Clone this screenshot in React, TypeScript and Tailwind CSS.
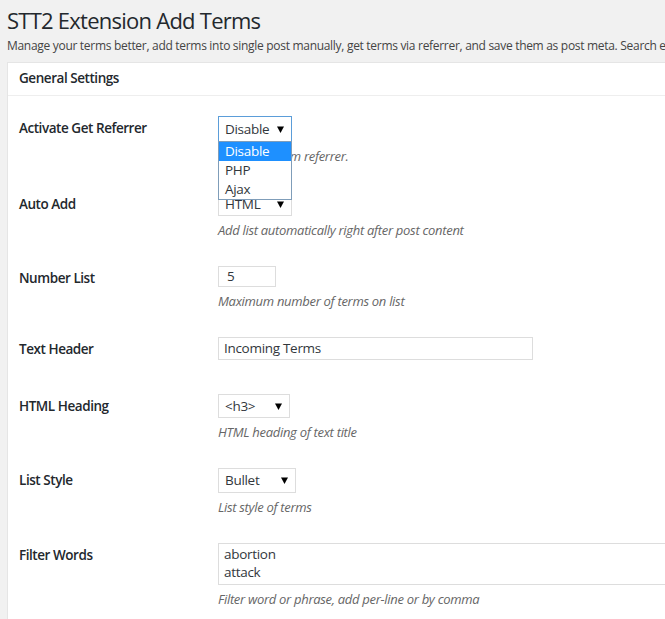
import React from "react";

const Arrow = () => (
  <svg width="7" height="7" viewBox="0 0 7 7" className="shrink-0">
    <polygon points="0,0.5 7,0.5 3.5,7" fill="#000" />
  </svg>
);

const Row = ({ label, children, last }: { label: string; children: React.ReactNode; last?: boolean }) => (
  <div className={`flex pt-[13px] ${last ? "pb-[19px]" : "pb-[13px]"}`}>
    <div className="w-[210px] shrink-0 pl-[11px] text-[13.5px] font-semibold leading-[25px] tracking-[-0.45px] text-[#23282d]">
      {label}
    </div>
    <div className="flex flex-col">{children}</div>
  </div>
);

const Desc = ({ children }: { children: React.ReactNode }) => (
  <p className="mt-[4px] text-[13px] italic leading-[20px] tracking-[-0.3px] text-[#666]">{children}</p>
);

const SelectBox = ({ value, w, h, focused }: { value: string; w: string; h: string; focused?: boolean }) => (
  <div
    className={`flex items-center justify-between border bg-white pl-[6px] pr-[7px] text-[13.5px] tracking-[-0.3px] text-[#32373c] ${w} ${h} ${
      focused ? "border-[#5b9dd9]" : "border-[#ddd]"
    }`}
  >
    <span>{value}</span>
    <Arrow />
  </div>
);

export default function App() {
  return (
    <div
      className="h-[619px] w-[665px] overflow-hidden bg-[#f1f1f1]"
      style={{ fontFamily: '"Open Sans", "Liberation Sans", sans-serif' }}
    >
      <div className="w-[1000px] pl-[7px]">
        <h1 className="pt-[4px] text-[22px] font-normal leading-[32px] tracking-[-0.75px] text-[#23282d]">
          STT2 Extension Add Terms
        </h1>
        <p className="mt-[1px] whitespace-nowrap text-[12px] leading-[18px] tracking-[-0.3px] text-[#444]">
          Manage your terms better, add terms into single post manually, get terms via referrer, and save them as post meta. Search engine terms.
        </p>

        <div className="mt-[7px] border border-[#e5e5e5] bg-white">
          <div className="border-b border-[#eee] px-[11px] pt-[6px] pb-[8px] text-[13.5px] font-semibold leading-[18px] tracking-[-0.45px] text-[#23282d]">
            General Settings
          </div>

          <div className="pt-[7px]">
            <Row label="Activate Get Referrer">
              <div className="relative">
                <SelectBox value="Disable" w="w-[74px]" h="h-[26px]" focused />
                <div className="absolute left-0 top-[25px] z-10 w-[74px] border border-[#7f9db9] bg-white text-[13.5px] leading-[19px] tracking-[-0.3px] text-[#32373c]">
                  <div className="bg-[#1e90ff] pl-[6px] text-white">Disable</div>
                  <div className="pl-[6px]">PHP</div>
                  <div className="pl-[6px]">Ajax</div>
                </div>
              </div>
              <Desc>Get terms from referrer.</Desc>
            </Row>

            <Row label="Auto Add">
              <SelectBox value="HTML" w="w-[74px]" h="h-[24px]" />
              <Desc>Add list automatically right after post content</Desc>
            </Row>

            <Row label="Number List">
              <div className="flex h-[21px] w-[58px] items-center border border-[#ddd] pl-[8px] text-[13.5px] text-[#32373c]">5</div>
              <Desc>Maximum number of terms on list</Desc>
            </Row>

            <Row label="Text Header" last>
              <div className="flex h-[23px] w-[315px] items-center border border-[#ddd] pl-[5px] text-[13.5px] tracking-[-0.3px] text-[#32373c]">
                Incoming Terms
              </div>
            </Row>

            <Row label="HTML Heading">
              <SelectBox value="<h3>" w="w-[72px]" h="h-[24px]" />
              <Desc>HTML heading of text title</Desc>
            </Row>

            <Row label="List Style">
              <SelectBox value="Bullet" w="w-[78px]" h="h-[25px]" />
              <Desc>List style of terms</Desc>
            </Row>

            <Row label="Filter Words">
              <div className="h-[42px] w-[500px] border border-[#ddd] px-[5px] pt-[1px] text-[13.5px] leading-[18px] tracking-[-0.3px] text-[#32373c]">
                <div>abortion</div>
                <div>attack</div>
              </div>
              <Desc>Filter word or phrase, add per-line or by comma</Desc>
            </Row>
          </div>
        </div>
      </div>
    </div>
  );
}
